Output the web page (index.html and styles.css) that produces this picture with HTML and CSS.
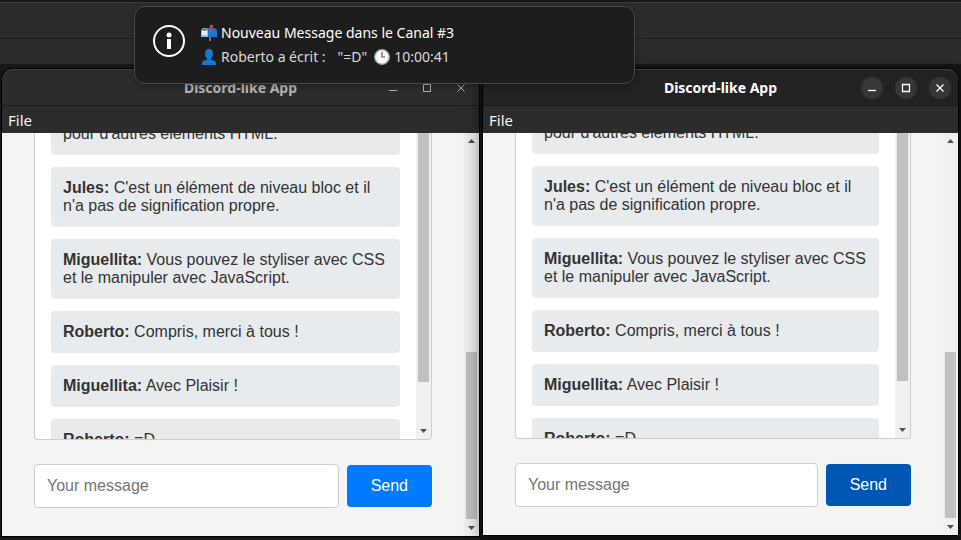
FILE: index.html
```html
<!DOCTYPE html>
<html lang="fr">
<head>
<meta charset="utf-8">
<meta name="viewport" content="width=device-width, initial-scale=1">
<title>Discord-like App</title>
<link rel="stylesheet" href="styles.css">
</head>
<body>
<div class="desktop">
  <div class="backdrop" aria-hidden="true">
    <div class="backdrop-title"></div>
    <div class="backdrop-menu"></div>
  </div>

  <section class="notification" role="status">
    <svg class="info" viewBox="0 0 32 32" aria-hidden="true">
      <circle cx="16" cy="16" r="15" fill="none" stroke="#fff" stroke-width="2"/>
      <circle cx="16" cy="10" r="2.5" fill="#fff"/>
      <path d="M14 14h4v10h-4z" fill="#fff"/>
    </svg>
    <div class="notification-text">
      <p class="notification-line notification-heading">
        <svg class="emoji" viewBox="0 0 16 16" aria-hidden="true">
          <path d="M8 11h2v5H8z" fill="#a1665a"/>
          <path d="M3 3h9.500a3.500 3.500 0 0 1 3.500 3.500V12H7z" fill="#1976d2"/>
          <path d="M0 6.500a3.500 3.500 0 0 1 7 0V12H0z" fill="#81c7f5"/>
          <path d="M1 6.500a2.500 2.500 0 0 1 5 0V8H1z" fill="#37474f"/>
          <path d="M1 5.500h5V10H1z" fill="#eceff1"/>
          <path d="M9 0h3v2.500h-1.500V7H9z" fill="#f44336"/>
        </svg>
        <span>Nouveau Message dans le Canal #3</span>
      </p>
      <p class="notification-line">
        <svg class="emoji" viewBox="0 0 16 16" aria-hidden="true">
          <path d="M8 0c3 0 4 2 4 5s-2 5-4 5-4-2-4-5 1-5 4-5z" fill="#1976d2"/>
          <path d="M6 9h4v2c3 0 5 1 5 4v1H1v-1c0-3 2-4 5-4z" fill="#1976d2"/>
        </svg>
        <span>Roberto a écrit :</span>
        <span class="quote">"=D"</span>
        <svg class="emoji" viewBox="0 0 16 16" aria-hidden="true">
          <circle cx="8" cy="8" r="7.200" fill="#fafafa" stroke="#9fb9c4" stroke-width="1.400"/>
          <path d="M8 3v5h3" fill="none" stroke="#5d5555" stroke-width="1.200"/>
        </svg>
        <span>10:00:41</span>
      </p>
    </div>
  </section>

  <main class="windows">
    <section class="window">
      <header class="titlebar">
        <h1 class="title">Discord-like App</h1>
        <div class="controls">
          <button class="control" type="button" aria-label="Minimize"><svg viewBox="0 0 22 22"><path d="M7 13.5h8"/></svg></button>
          <button class="control" type="button" aria-label="Maximize"><svg viewBox="0 0 22 22"><path d="M7.5 7.5h7v7h-7z"/></svg></button>
          <button class="control" type="button" aria-label="Close"><svg viewBox="0 0 22 22"><path d="M7.5 7.5l7 7m0-7l-7 7"/></svg></button>
        </div>
      </header>
      <nav class="menubar"><button class="menu" type="button">File</button></nav>
      <div class="viewport">
        <div class="page">
          <div class="chat">
            <div class="messages">
              <p class="message">pour d'autres éléments HTML.</p>
              <p class="message"><strong>Jules:</strong> C'est un élément de niveau bloc et il n'a pas de signification propre.</p>
              <p class="message"><strong>Miguellita:</strong> Vous pouvez le styliser avec CSS et le manipuler avec JavaScript.</p>
              <p class="message"><strong>Roberto:</strong> Compris, merci à tous !</p>
              <p class="message"><strong>Miguellita:</strong> Avec Plaisir !</p>
              <p class="message"><strong>Roberto:</strong> =D</p>
            </div>
            <div class="scrollbar chat-scroll" aria-hidden="true">
              <div class="thumb"></div>
              <svg class="arrow" viewBox="0 0 7 4"><path d="M0 0h7L3.5 4z"/></svg>
            </div>
          </div>
          <form class="composer">
            <input class="field" type="text" placeholder="Your message" aria-label="Your message">
            <button class="send" type="button">Send</button>
          </form>
        </div>
        <div class="scrollbar page-scroll" aria-hidden="true">
          <svg class="arrow" viewBox="0 0 7 4"><path d="M0 4h7L3.5 0z"/></svg>
          <div class="thumb"></div>
          <svg class="arrow" viewBox="0 0 7 4"><path d="M0 0h7L3.5 4z"/></svg>
        </div>
      </div>
    </section>

    <section class="window active">
      <header class="titlebar">
        <h1 class="title">Discord-like App</h1>
        <div class="controls">
          <button class="control" type="button" aria-label="Minimize"><svg viewBox="0 0 22 22"><path d="M7 13.5h8"/></svg></button>
          <button class="control" type="button" aria-label="Maximize"><svg viewBox="0 0 22 22"><path d="M7.5 7.5h7v7h-7z"/></svg></button>
          <button class="control" type="button" aria-label="Close"><svg viewBox="0 0 22 22"><path d="M7.5 7.5l7 7m0-7l-7 7"/></svg></button>
        </div>
      </header>
      <nav class="menubar"><button class="menu" type="button">File</button></nav>
      <div class="viewport">
        <div class="page">
          <div class="chat">
            <div class="messages">
              <p class="message">pour d'autres éléments HTML.</p>
              <p class="message"><strong>Jules:</strong> C'est un élément de niveau bloc et il n'a pas de signification propre.</p>
              <p class="message"><strong>Miguellita:</strong> Vous pouvez le styliser avec CSS et le manipuler avec JavaScript.</p>
              <p class="message"><strong>Roberto:</strong> Compris, merci à tous !</p>
              <p class="message"><strong>Miguellita:</strong> Avec Plaisir !</p>
              <p class="message"><strong>Roberto:</strong> =D</p>
            </div>
            <div class="scrollbar chat-scroll" aria-hidden="true">
              <div class="thumb"></div>
              <svg class="arrow" viewBox="0 0 7 4"><path d="M0 0h7L3.5 4z"/></svg>
            </div>
          </div>
          <form class="composer">
            <input class="field" type="text" placeholder="Your message" aria-label="Your message">
            <button class="send" type="button">Send</button>
          </form>
        </div>
        <div class="scrollbar page-scroll" aria-hidden="true">
          <svg class="arrow" viewBox="0 0 7 4"><path d="M0 4h7L3.5 0z"/></svg>
          <div class="thumb"></div>
          <svg class="arrow" viewBox="0 0 7 4"><path d="M0 0h7L3.5 4z"/></svg>
        </div>
      </div>
    </section>
  </main>
</div>
</body>
</html>
```
FILE: styles.css
```css
* { box-sizing: border-box; }

body {
  margin: 0;
  background: #161616;
  color: #333;
  font-family: "Liberation Sans", Arial, sans-serif;
  font-size: 16px;
  line-height: 18px;
}

h1, p { margin: 0; }

button, input { font: inherit; }

.desktop {
  position: relative;
  display: flex;
  flex-direction: column;
  height: 100vh;
  overflow: hidden;
  padding-top: 2px;
}

/* Window partly covered by the two chat windows */
.backdrop {
  flex: none;
  margin-bottom: 5px;
  background: #2c2c2c;
  border-top: 1px solid #3d3d3d;
}

.backdrop-title {
  height: 36px;
  border-bottom: 1px solid #1b1b1b;
}

.backdrop-menu { height: 25px; }

/* Notification */
.notification {
  position: absolute;
  z-index: 3;
  top: 6px;
  left: 134px;
  display: flex;
  align-items: center;
  gap: 16px;
  width: 501px;
  max-width: calc(100vw - 160px);
  padding: 14px 18px;
  border: 1px solid #484848;
  border-radius: 11px;
  background: #1d1d1d;
  box-shadow: 0 2px 6px rgba(0, 0, 0, .3);
  color: #dadada;
  font-family: "Noto Sans", "Open Sans", sans-serif;
  font-size: 14px;
  line-height: 24px;
}

.info {
  flex: none;
  width: 32px;
  height: 32px;
  margin-top: -8px;
}

.notification-line {
  display: flex;
  align-items: center;
  gap: 4px;
  white-space: nowrap;
}

.notification-heading { color: #fff; }

.quote { margin: 0 3px 0 8px; }

.emoji {
  flex: none;
  width: 16px;
  height: 16px;
}

/* Chat windows */
.windows {
  flex: 1;
  display: flex;
  align-items: stretch;
  gap: 4px;
  min-height: 0;
  padding: 0 3px 4px 2px;
}

.window {
  flex: 239;
  display: flex;
  flex-direction: column;
  min-width: 0;
  min-height: 0;
  border-radius: 11px 11px 0 0;
  background: #2c2c2c;
  box-shadow: 0 0 0 1px #000;
}

.window.active {
  position: relative;
  flex: 238;
  margin-bottom: 1px;
  box-shadow: 0 0 0 1px #000, 0 3px 20px rgba(0, 0, 0, .6);
}

.titlebar {
  flex: none;
  display: grid;
  grid-template-columns: 1fr auto 1fr;
  align-items: center;
  height: 37px;
  padding-right: 7px;
  padding-left: 7px;
  border-top: 1px solid #434343;
  border-bottom: 1px solid #1b1b1b;
  border-radius: 11px 11px 0 0;
  background: #2c2c2c;
  color: #b5b5b5;
}

.active .titlebar {
  background: #222;
  color: #fff;
}

.title {
  grid-column: 2;
  font-family: "Noto Sans", "Open Sans", sans-serif;
  font-size: 14px;
  font-weight: 700;
  line-height: 20px;
}

.controls {
  display: flex;
  justify-content: flex-end;
  gap: 12px;
}

.control {
  width: 22px;
  height: 22px;
  padding: 0;
  border: 0;
  border-radius: 50%;
  background: none;
  color: inherit;
}

.active .control { background: #373737; }

.control svg {
  display: block;
  fill: none;
  stroke: currentColor;
}

.active .control svg { stroke-width: 1.3; }

.menubar {
  flex: none;
  height: 27px;
}

.menu {
  height: 27px;
  padding: 0 6px;
  border: 0;
  background: none;
  color: #f5f5f5;
  font-family: "Noto Sans", "Open Sans", sans-serif;
  font-size: 15px;
}

.viewport {
  flex: 1;
  display: flex;
  min-height: 0;
  background: #f4f4f4;
}

.page {
  flex: 1;
  display: flex;
  flex-direction: column;
  gap: 24px;
  min-width: 0;
  padding: 0 32px 28px;
}

.chat {
  flex: 1;
  display: flex;
  min-height: 0;
  overflow: hidden;
  border: 1px solid #ccc;
  border-top: 0;
  border-radius: 0 0 4px 4px;
  background: #fff;
}

/* The latest message is only partly scrolled into view */
.messages {
  flex: 1;
  display: flex;
  flex-direction: column;
  justify-content: flex-end;
  gap: 12px;
  min-width: 0;
  margin-bottom: -22px;
  padding: 0 16px;
}

.message {
  flex: none;
  padding: 12px;
  border-radius: 4px;
  background: #e7ebee;
}

.composer {
  flex: none;
  display: flex;
  align-items: center;
  gap: 8px;
}

.field {
  flex: 1;
  min-width: 0;
  height: 44px;
  padding: 0 12px;
  border: 1px solid #ccc;
  border-radius: 4px;
  background: #fff;
  color: #333;
}

.field::placeholder { color: #757575; }

.send {
  height: 42px;
  padding: 0 24px;
  border: 0;
  border-radius: 4px;
  background: #007bff;
  color: #fff;
}

.active .send { background: #0056b3; }

/* Scrollbars */
.scrollbar {
  flex: none;
  display: flex;
  flex-direction: column;
  align-items: center;
  width: 15px;
  background: #f0f0f0;
}

.thumb {
  width: 11px;
  background: #c1c1c1;
}

.chat-scroll {
  justify-content: space-between;
  padding-bottom: 6px;
}

.chat-scroll .thumb { height: 249px; }

.page-scroll { padding: 6px 0; }

.page-scroll .thumb {
  height: 167px;
  margin: auto 0 7px;
}

.active .chat-scroll .thumb { height: 248px; }

.active .page-scroll .thumb { height: 166px; }

.arrow {
  flex: none;
  width: 7px;
  height: 4px;
  fill: #505050;
}
```
